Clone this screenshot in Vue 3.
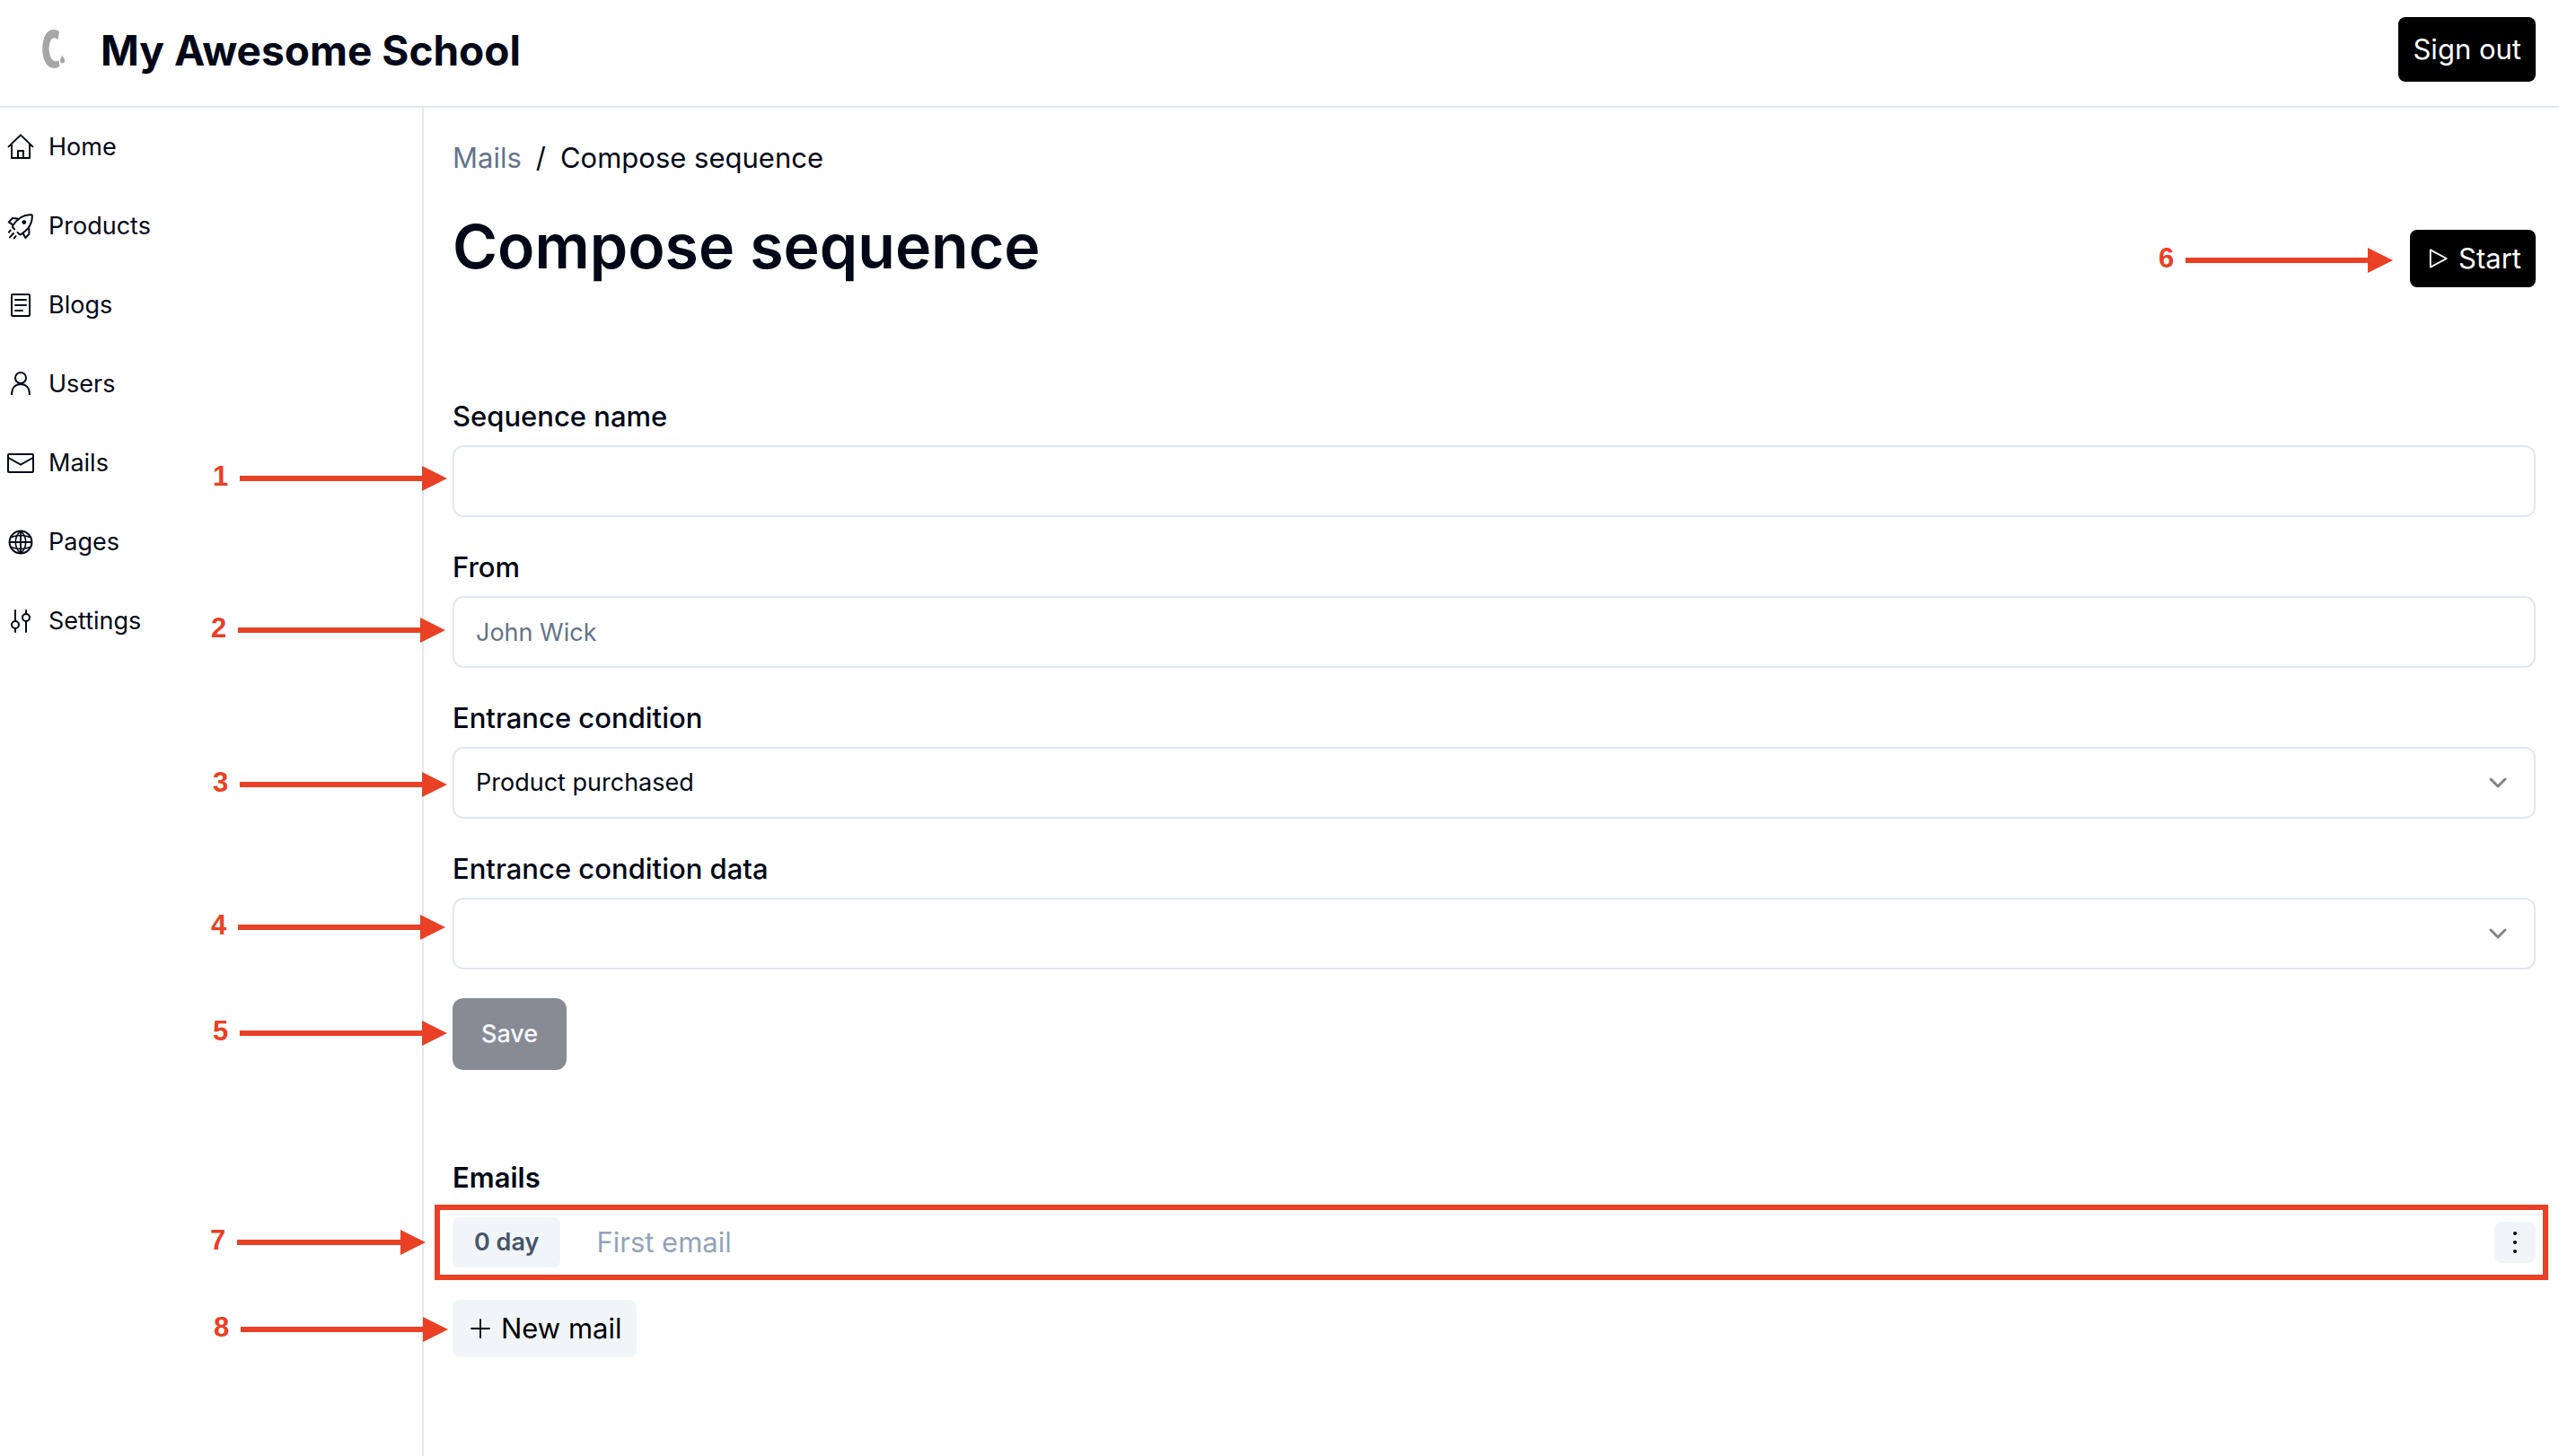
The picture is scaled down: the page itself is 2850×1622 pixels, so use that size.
<script setup>
import { ref } from 'vue'

const nav = ['Home', 'Products', 'Blogs', 'Users', 'Mails', 'Pages', 'Settings']

const sequenceName = ref('')
const from = ref('')
const condition = ref('Product purchased')
const conditionData = ref('')

// Callouts placed over the page: outer edge, centre line and arrow length
const callouts = [
  { n: 1, side: 'left', x: 237, y: 533, length: 231 },
  { n: 2, side: 'left', x: 235, y: 702, length: 231 },
  { n: 3, side: 'left', x: 237, y: 874, length: 231 },
  { n: 4, side: 'left', x: 235, y: 1033, length: 231 },
  { n: 5, side: 'left', x: 237, y: 1151, length: 231 },
  { n: 6, side: 'right', x: 185, y: 290, length: 231 },
  { n: 7, side: 'left', x: 234, y: 1384, length: 210 },
  { n: 8, side: 'left', x: 238, y: 1481, length: 231 },
]
</script>

<template>
  <div class="app">
    <header class="topbar">
      <a class="brand" href="#">
        <svg class="logo" viewBox="0 0 32 48" fill="#a6a6a6" aria-hidden="true">
          <path d="M22 4C18 1 11 1 7 7C2 15 2 32 7 39C11 46 18 46 22.500 43L21.500 36C18 38.500 14.500 37 12.500 33C10 27 10 19 12.500 14C14.500 10.500 18 10.500 20.500 13.500Z" />
          <path d="M25.500 30.500C26.500 33 28 34 28 36A2.500 3.500 0 0 1 23 36C23 34 24.500 33 25.500 30.500Z" />
        </svg>
        <span class="brand-name">My Awesome School</span>
      </a>
      <button class="btn dark sign-out" type="button">Sign out</button>
    </header>

    <div class="body">
      <nav class="sidebar">
        <a v-for="item in nav" :key="item" class="nav-link" href="#">
          <svg class="icon" viewBox="0 0 15 15" fill="none" stroke="currentColor" aria-hidden="true">
            <template v-if="item === 'Home'">
              <path d="M.8 7.200L7.500.7l6.700 6.500M2.500 6v7.500h10V6M6 13.500V9.500h3v4" stroke-linecap="round" stroke-linejoin="round" />
            </template>
            <template v-else-if="item === 'Products'">
              <path d="M13.600 1.100C9 .8 5.500 3.500 3.200 7L3 8l1 1.200M5.800 11l1.400 1.200.8-.4C11.500 9.500 14.200 6.500 13.900 1.400M5.700 3.200L3 3 .9 5.200l1.800 1.200M12.200 9v2.800L10.200 14 9 11.800M1.800 9.800l-.8 1M3.500 11.500l-2 2.200M4.800 13l-.9 1.200" stroke-linecap="round" stroke-linejoin="round" />
              <circle cx="9.400" cy="5.300" r="1.200" fill="currentColor" stroke="none" />
            </template>
            <template v-else-if="item === 'Blogs'">
              <rect x="2.500" y="1.500" width="10" height="12" rx=".5" />
              <path d="M4.500 4.500h6M4.500 7.500h6M4.500 10.500h4" stroke-linecap="round" />
            </template>
            <template v-else-if="item === 'Users'">
              <circle cx="7.500" cy="4" r="3" />
              <path d="M2.500 13.500c0-4 2-6 5-6s5 2 5 6" />
            </template>
            <template v-else-if="item === 'Mails'">
              <rect x=".5" y="2.500" width="14" height="10" rx=".5" />
              <path d="M.7 4.500L7.500 8.300l6.800-3.800" />
            </template>
            <template v-else-if="item === 'Pages'">
              <circle cx="7.500" cy="7.500" r="6.200" />
              <path d="M7.500 1v13M1 7.500h13" />
              <path d="M7.500 1.300C3.700 4.500 3.700 10.500 7.500 13.700M7.500 1.300C11.300 4.500 11.300 10.500 7.500 13.700M2.200 4.700C5.500 3.500 9.500 3.500 12.800 4.700M2.200 10.300C5.500 11.500 9.500 11.500 12.800 10.300" stroke-width=".8" />
            </template>
            <template v-else>
              <circle cx="4.500" cy="9.500" r="2" />
              <circle cx="10.500" cy="5.500" r="2" />
              <path d="M4.500 1.500v6M4.500 11.500v2M10.500 1.500v2M10.500 7.500v6" stroke-linecap="round" />
            </template>
          </svg>
          <span>{{ item }}</span>
        </a>
      </nav>

      <main class="content">
        <div class="crumbs">
          <a href="#">Mails</a>
          <span>/</span>
          <span>Compose sequence</span>
        </div>

        <div class="title-row">
          <h1>Compose sequence</h1>
          <button class="btn dark" type="button">
            <svg class="icon" viewBox="0 0 15 15" fill="none" stroke="currentColor" aria-hidden="true">
              <path d="M3.400 2.700v9.600l9-4.800z" stroke-linejoin="round" stroke-width=".9" />
            </svg>
            <span>Start</span>
          </button>
        </div>

        <form class="form" @submit.prevent>
          <div class="field">
            <label for="sequence-name">Sequence name</label>
            <input id="sequence-name" v-model="sequenceName" class="control" type="text" />
          </div>
          <div class="field">
            <label for="from">From</label>
            <input id="from" v-model="from" class="control" type="text" placeholder="John Wick" />
          </div>
          <div class="field">
            <label for="condition">Entrance condition</label>
            <div class="select-wrap">
              <select id="condition" v-model="condition" class="control">
                <option>Product purchased</option>
              </select>
              <svg class="chevron" viewBox="0 0 32 32" fill="none" aria-hidden="true">
                <path d="M8 12l8 8 8-8" stroke="currentColor" stroke-width="3" stroke-linecap="round" />
              </svg>
            </div>
          </div>
          <div class="field">
            <label for="condition-data">Entrance condition data</label>
            <div class="select-wrap">
              <select id="condition-data" v-model="conditionData" class="control">
                <option value=""></option>
              </select>
              <svg class="chevron" viewBox="0 0 32 32" fill="none" aria-hidden="true">
                <path d="M8 12l8 8 8-8" stroke="currentColor" stroke-width="3" stroke-linecap="round" />
              </svg>
            </div>
          </div>
          <button class="save" type="submit" disabled>Save</button>
        </form>

        <section class="emails">
          <h2>Emails</h2>
          <div class="email-row">
            <span class="delay">0 day</span>
            <a class="subject" href="#">First email</a>
            <button class="more" type="button" aria-label="Email options">
              <svg class="icon" viewBox="0 0 30 30" fill="currentColor" aria-hidden="true">
                <circle cx="15" cy="5" r="2" />
                <circle cx="15" cy="15" r="2" />
                <circle cx="15" cy="25" r="2" />
              </svg>
            </button>
            <span class="highlight"></span>
          </div>
          <button class="btn light" type="button">
            <svg class="icon" viewBox="0 0 15 15" fill="none" stroke="currentColor" aria-hidden="true">
              <path d="M7.500 2.500v10M2.500 7.500h10" stroke-width=".9" stroke-linecap="round" />
            </svg>
            <span>New mail</span>
          </button>
        </section>
      </main>
    </div>

    <div
      v-for="c in callouts"
      :key="c.n"
      class="callout"
      :style="{ [c.side]: c.x + 'px', top: c.y + 'px' }"
    >
      <span class="number">{{ c.n }}</span>
      <span class="arrow" :style="{ width: c.length + 'px' }"></span>
    </div>
  </div>
</template>

<style>
body {
  margin: 0;
  background: #fff;
}
</style>

<style scoped>
.app {
  position: relative;
  display: flex;
  flex-direction: column;
  min-height: 100vh;
  color: #020817;
  font-family: Inter, "Liberation Sans", sans-serif;
  font-size: 31px;
  line-height: 48px;
}

*,
*::before,
*::after {
  box-sizing: border-box;
}

a {
  color: inherit;
  text-decoration: none;
}

button,
input,
select {
  font: inherit;
}

svg {
  display: block;
  flex: none;
}

.icon {
  width: 30px;
  height: 30px;
}

.topbar {
  display: flex;
  align-items: center;
  justify-content: space-between;
  height: 120px;
  padding: 0 26px 8px 44px;
  border-bottom: 2px solid #e2e8f0;
}

.brand {
  display: flex;
  align-items: center;
  gap: 36px;
}

.logo {
  width: 32px;
  height: 48px;
}

.brand-name {
  padding-top: 2px;
  font-size: 46px;
  font-weight: 700;
}

.btn {
  display: flex;
  align-items: center;
  gap: 8px;
  height: 64px;
  padding: 0 16px;
  border: 0;
  border-radius: 8px;
}

.dark {
  background: #000;
  color: #fff;
}

.light {
  background: #f1f5f9;
  color: #000;
}

.sign-out {
  height: 72px;
}

.body {
  display: flex;
  flex: 1;
}

.sidebar {
  flex: none;
  width: 472px;
  border-right: 2px solid #e2e8f0;
}

.nav-link {
  display: flex;
  align-items: center;
  gap: 16px;
  height: 88px;
  padding: 0 8px;
  font-size: 27px;
}

.content {
  flex: 1;
  padding: 32px 26px 32px 32px;
}

.crumbs {
  display: flex;
  gap: 16px;
}

.crumbs a {
  color: #64748b;
}

.title-row {
  display: flex;
  align-items: flex-end;
  justify-content: space-between;
  margin-top: 34px;
}

h1 {
  margin: 0;
  padding-bottom: 6px;
  font-size: 68px;
  font-weight: 600;
  line-height: 80px;
}

.form {
  display: flex;
  flex-direction: column;
  gap: 40px;
  margin-top: 128px;
}

.field {
  display: flex;
  flex-direction: column;
  gap: 16px;
}

label {
  font-weight: 500;
  line-height: 32px;
}

.control {
  display: block;
  width: 100%;
  height: 80px;
  padding: 0 24px;
  border: 2px solid #e2e8f0;
  border-radius: 12px;
  background: #fff;
  color: #020817;
  font-size: 27px;
  appearance: none;
}

.control::placeholder {
  color: #64748b;
  opacity: 1;
}

.select-wrap {
  position: relative;
}

.chevron {
  position: absolute;
  top: 24px;
  right: 26px;
  width: 32px;
  height: 32px;
  color: #80838b;
  pointer-events: none;
}

.save {
  align-self: flex-start;
  height: 80px;
  margin-top: -8px;
  padding: 0 32px;
  border: 0;
  border-radius: 12px;
  background: #878b94;
  color: #f8fafc;
  font-size: 27px;
  font-weight: 500;
}

.emails {
  margin-top: 96px;
}

h2 {
  margin: 0;
  font-size: 31px;
  font-weight: 600;
  line-height: 48px;
}

.email-row {
  position: relative;
  display: flex;
  align-items: center;
  gap: 40px;
  margin: 20px 0 36px;
}

.delay {
  padding: 4px 24px;
  border-radius: 8px;
  background: #f1f5f9;
  color: #475569;
  font-size: 27px;
  font-weight: 600;
}

.subject {
  flex: 1;
  color: #94a3b8;
}

.more {
  padding: 8px;
  border: 0;
  border-radius: 8px;
  background: #f1f5f9;
  color: #000;
}

.highlight {
  position: absolute;
  inset: -14px -14px -14px -20px;
  border: 6px solid #ea4025;
  pointer-events: none;
}

.callout {
  position: absolute;
  display: flex;
  align-items: center;
  gap: 12px;
  color: #ea4025;
  font-family: "Liberation Sans", Arial, sans-serif;
  font-weight: 700;
  line-height: 32px;
  transform: translateY(-50%);
  pointer-events: none;
}

.number {
  width: 18px;
  padding-bottom: 4px;
}

.arrow {
  position: relative;
  height: 6px;
  background: linear-gradient(to left, transparent 20px, #ea4025 20px);
}

.arrow::after {
  content: "";
  position: absolute;
  top: -11px;
  right: 0;
  border: 14px solid transparent;
  border-right-width: 0;
  border-left: 28px solid #ea4025;
}
</style>
